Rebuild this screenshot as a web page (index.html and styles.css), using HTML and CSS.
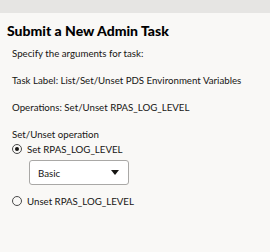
FILE: index.html
```html
<!DOCTYPE html>
<html lang="en">

<head>
    <meta charset="UTF-8">
    <meta name="viewport" content="width=device-width, initial-scale=1.0">
    <title>Submit a New Admin Task</title>
    <link rel="stylesheet" href="styles.css">
</head>

<body>
    <div class="topbar"></div>
    <div class="panel">
        <h1>Submit a New Admin Task</h1>
        <p class="line">Specify the arguments for task:</p>
        <p class="line">Task Label: List/Set/Unset PDS Environment Variables</p>
        <p class="line">Operations: Set/Unset RPAS_LOG_LEVEL</p>

        <div class="group">
            <div class="group-label">Set/Unset operation</div>
            <label class="radio">
                <span class="dot checked"></span>
                Set RPAS_LOG_LEVEL
            </label>
            <div class="select">
                <span>Basic</span>
                <svg width="8" height="5" viewBox="0 0 8 5"><path d="M0 0h8L4 5z" fill="#161513"/></svg>
            </div>
            <label class="radio">
                <span class="dot"></span>
                Unset RPAS_LOG_LEVEL
            </label>
        </div>
    </div>
</body>

</html>
```

FILE: styles.css
```css
body {
    margin: 0;
    font-family: Lato, "Noto Sans", sans-serif;
    background-color: #f9f8f6;
    color: #161513;
}

.topbar {
    height: 13px;
    background-color: #e6e5e3;
}

.panel {
    padding: 0 7px;
}

h1 {
    margin: 10px 0 0;
    font-size: 14px;
    line-height: 16px;
    font-weight: 900;
    color: #000;
}

.line {
    margin: 0 0 0 5px;
    font-size: 9.7px;
    line-height: 14px;
    padding-top: 13px;
}

.line:first-of-type {
    padding-top: 7px;
}

.group {
    margin: 13px 0 0 5px;
    font-size: 9.7px;
}

.group-label {
    line-height: 14px;
}

.radio {
    display: flex;
    align-items: center;
    gap: 5px;
    line-height: 16px;
}

.dot {
    width: 10px;
    height: 10px;
    border: 1px solid #4a4a4a;
    border-radius: 50%;
    box-sizing: border-box;
    display: inline-block;
    position: relative;
}

.dot.checked::after {
    content: "";
    position: absolute;
    left: 2px;
    top: 2px;
    width: 4px;
    height: 4px;
    border-radius: 50%;
    background-color: #161513;
}

.select {
    width: 100px;
    height: 25px;
    margin: 3px 0 8px 17px;
    border: 1px solid #a9a8a6;
    border-radius: 3px;
    background-color: #fff;
    box-sizing: border-box;
    display: flex;
    align-items: center;
    justify-content: space-between;
    padding: 0 9px 0 8px;
}
```
